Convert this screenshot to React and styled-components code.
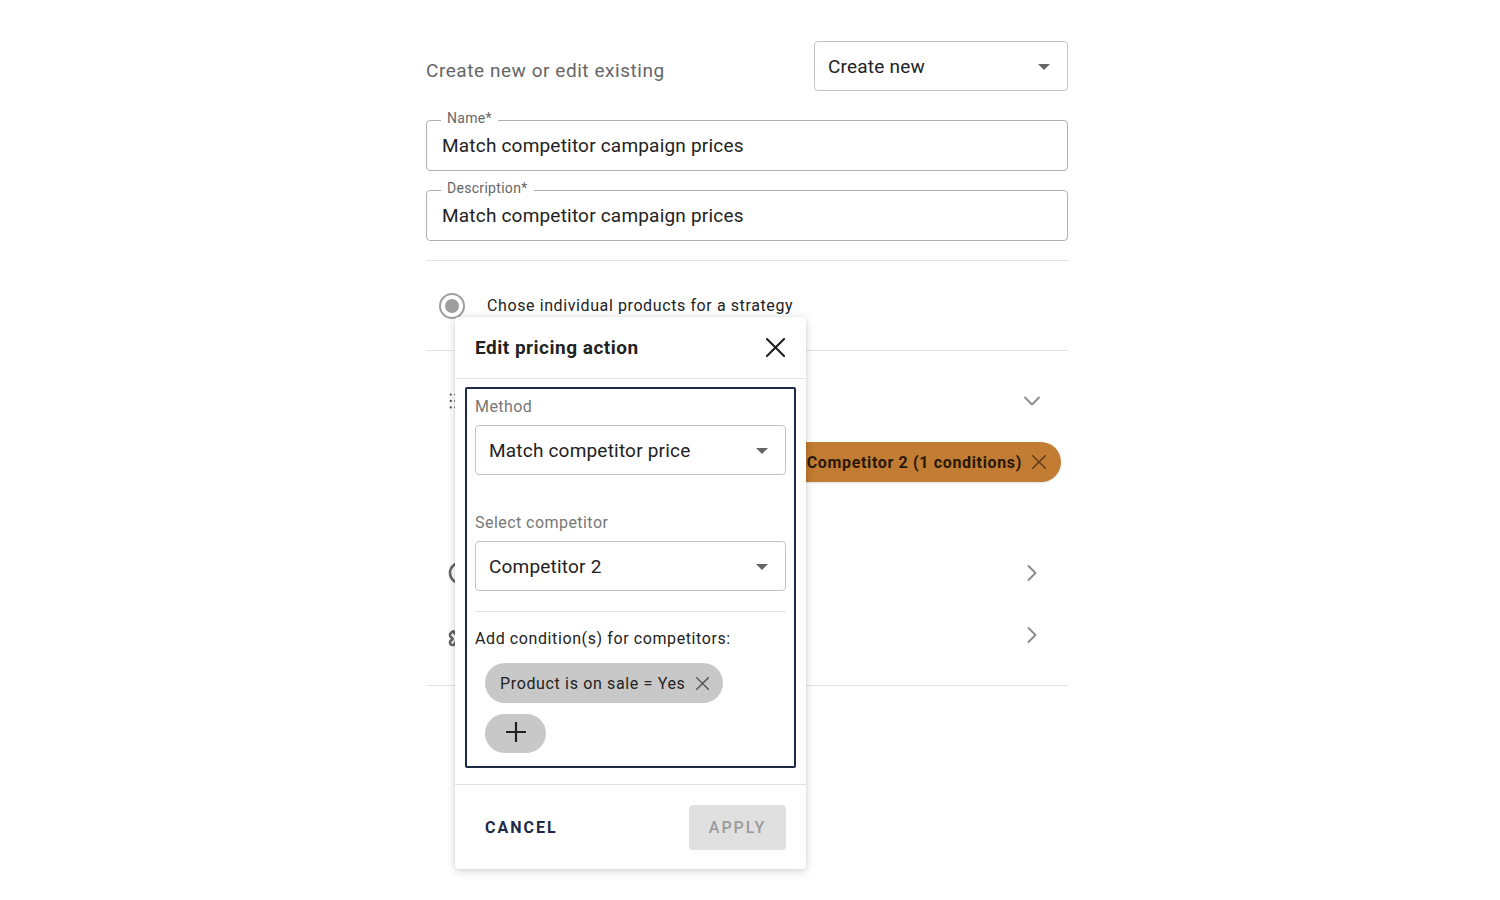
import styled, { createGlobalStyle } from "styled-components";
import { ChevronDown, ChevronRight, List, Circle, Puzzle } from "lucide-react";

const GlobalStyle = createGlobalStyle`
  body {
    margin: 0;
    background: #ffffff;
    font-family: Roboto, "Liberation Sans", sans-serif;
    color: #222222;
  }
`;

const Caret = () => (
  <svg width="12" height="6" viewBox="0 0 12 6">
    <path d="M0 0 L12 0 L6 6 Z" fill="#666" />
  </svg>
);

const Cross = ({ size, color, stroke }) => (
  <svg width={size} height={size} viewBox="0 0 20 20">
    <path
      d="M1 1 L19 19 M19 1 L1 19"
      stroke={color}
      strokeWidth={stroke}
      strokeLinecap="square"
      fill="none"
    />
  </svg>
);

const PlusMark = () => (
  <svg width="20" height="20" viewBox="0 0 20 20">
    <path d="M10 0 V20 M0 10 H20" stroke="#222" strokeWidth="2.2" fill="none" />
  </svg>
);

const App = () => {
  return (
    <>
      <GlobalStyle />
      <Page>
        <Column>
          <TopRow>
            <TopLabel>Create new or edit existing</TopLabel>
            <Select width="254px">
              <span>Create new</span>
              <Caret />
            </Select>
          </TopRow>

          <OutlinedField>
            <FieldLegend>Name*</FieldLegend>
            <span>Match competitor campaign prices</span>
          </OutlinedField>
          <OutlinedField>
            <FieldLegend>Description*</FieldLegend>
            <span>Match competitor campaign prices</span>
          </OutlinedField>

          <Divider />

          <RadioRow>
            <Radio>
              <span />
            </Radio>
            <RadioText>Chose individual products for a strategy</RadioText>
          </RadioRow>

          <Divider />

          <ListRow top="30px">
            <List size={22} color="#555" strokeWidth={2.5} />
            <ChevronDown size={28} color="#8a8a8a" strokeWidth={1.6} />
          </ListRow>
          <ChipRow>
            <OrangeChip>
              Competitor 2 (1 conditions)
              <Cross size={14} color="#5a3a1a" stroke={2} />
            </OrangeChip>
          </ChipRow>
          <ListRow top="66px" height="50px">
            <Circle size={24} color="#666" strokeWidth={2.6} />
            <ChevronRight size={28} color="#8a8a8a" strokeWidth={1.6} />
          </ListRow>
          <ListRow top="12px" height="50px">
            <Puzzle size={24} color="#666" strokeWidth={2.6} />
            <ChevronRight size={28} color="#8a8a8a" strokeWidth={1.6} />
          </ListRow>

          <Divider top="25px" />

          <Dialog>
            <DialogHeader>
              <DialogTitle>Edit pricing action</DialogTitle>
              <Cross size={19} color="#1e1e1e" stroke={2.2} />
            </DialogHeader>
            <DialogBody>
              <FocusBox>
                <SmallLabel top="0px">Method</SmallLabel>
                <Select width="100%">
                  <span>Match competitor price</span>
                  <Caret />
                </Select>
                <SmallLabel top="38px">Select competitor</SmallLabel>
                <Select width="100%">
                  <span>Competitor 2</span>
                  <Caret />
                </Select>
                <InnerDivider />
                <ConditionLabel>Add condition(s) for competitors:</ConditionLabel>
                <GreyChip>
                  Product is on sale = Yes
                  <Cross size={13} color="#555" stroke={2.2} />
                </GreyChip>
                <AddButton>
                  <PlusMark />
                </AddButton>
              </FocusBox>
            </DialogBody>
            <DialogFooter>
              <CancelButton>CANCEL</CancelButton>
              <ApplyButton>APPLY</ApplyButton>
            </DialogFooter>
          </Dialog>
        </Column>
      </Page>
    </>
  );
};

const Page = styled.div`
  min-height: 900px;
  padding-top: 41px;
`;

const Column = styled.div`
  position: relative;
  width: 642px;
  margin-left: 426px;
  display: flex;
  flex-direction: column;
`;

const TopRow = styled.div`
  display: flex;
  align-items: center;
  justify-content: space-between;
  margin-bottom: 29px;
`;

const TopLabel = styled.div`
  font-size: 19px;
  color: #666;
  letter-spacing: 0.55px;
  margin-top: 9px;
`;

const Select = styled.div`
  box-sizing: border-box;
  width: ${(p) => p.width};
  height: 50px;
  border: 1px solid #c4c4c4;
  border-radius: 4px;
  display: flex;
  align-items: center;
  justify-content: space-between;
  padding: 0 17px 0 13px;
  font-size: 19px;
  letter-spacing: 0.2px;
  color: #222;
  background: #fff;

  svg {
    margin-top: 1px;
  }
`;

const OutlinedField = styled.div`
  position: relative;
  box-sizing: border-box;
  height: 51px;
  border: 1px solid #b0b0b0;
  border-radius: 4px;
  display: flex;
  align-items: center;
  padding: 0 15px;
  font-size: 19px;
  letter-spacing: 0.2px;
  margin-bottom: 19px;
`;

const FieldLegend = styled.span`
  position: absolute;
  top: -11px;
  left: 14px;
  padding: 0 6px;
  background: #fff;
  font-size: 14px;
  color: #666;
  letter-spacing: 0.3px;
`;

const Divider = styled.div`
  height: 1px;
  background: #e2e2e2;
  margin-top: ${(p) => p.top || "0"};
`;

const RadioRow = styled.div`
  height: 89px;
  display: flex;
  align-items: center;
  gap: 22px;
  padding-left: 13px;
`;

const RadioText = styled.span`
  font-size: 16px;
  letter-spacing: 0.6px;
  color: #222;
`;

const Radio = styled.div`
  box-sizing: border-box;
  width: 26px;
  height: 26px;
  border-radius: 50%;
  border: 2px solid #9e9e9e;
  display: flex;
  align-items: center;
  justify-content: center;
  span {
    width: 14px;
    height: 14px;
    border-radius: 50%;
    background: #9e9e9e;
  }
`;

const ListRow = styled.div`
  height: ${(p) => p.height || "40px"};
  margin-top: ${(p) => p.top};
  display: flex;
  align-items: center;
  justify-content: space-between;
  padding: 0 22px 0 22px;
`;

const ChipRow = styled.div`
  margin-top: 21px;
  display: flex;
  justify-content: flex-end;
  padding-right: 7px;
`;

const OrangeChip = styled.div`
  height: 40px;
  border-radius: 20px;
  background: #c27c33;
  display: flex;
  align-items: center;
  gap: 10px;
  padding: 0 15px 0 20px;
  font-size: 16px;
  font-weight: 700;
  letter-spacing: 0.65px;
  color: #2a1808;
  box-shadow: 0 1px 2px rgba(0, 0, 0, 0.12);
`;

const Dialog = styled.div`
  position: absolute;
  left: 29px;
  top: 276px;
  width: 351px;
  background: #fff;
  border-radius: 4px;
  box-shadow: 0 2px 10px rgba(0, 0, 0, 0.18), 0 0 2px rgba(0, 0, 0, 0.08);
  display: flex;
  flex-direction: column;
`;

const DialogHeader = styled.div`
  height: 61px;
  display: flex;
  align-items: center;
  justify-content: space-between;
  padding: 0 21px 0 20px;
  border-bottom: 1px solid #e2e2e2;
`;

const DialogTitle = styled.div`
  font-size: 19px;
  font-weight: 700;
  color: #222;
  letter-spacing: 0.5px;
`;

const DialogBody = styled.div`
  padding: 8px 10px 16px;
  border-bottom: 1px solid #e2e2e2;
`;

const FocusBox = styled.div`
  border: 2px solid #1c2a48;
  border-radius: 2px;
  padding: 8px 8px 13px;
  display: flex;
  flex-direction: column;
  align-items: flex-start;
`;

const SmallLabel = styled.div`
  margin-top: ${(p) => p.top};
  height: 20px;
  line-height: 20px;
  font-size: 16px;
  color: #777;
  letter-spacing: 0.45px;
  margin-bottom: 8px;
`;

const InnerDivider = styled.div`
  width: 100%;
  height: 1px;
  background: #e4e4e4;
  margin-top: 20px;
`;

const ConditionLabel = styled.div`
  margin-top: 17px;
  font-size: 16px;
  line-height: 20px;
  color: #222;
  letter-spacing: 0.6px;
`;

const GreyChip = styled.div`
  margin: 14px 0 0 10px;
  height: 40px;
  border-radius: 20px;
  background: #c8c8c8;
  display: flex;
  align-items: center;
  gap: 11px;
  padding: 0 14px 0 15px;
  font-size: 16px;
  letter-spacing: 0.65px;
  color: #222;
`;

const AddButton = styled.div`
  margin: 11px 0 0 10px;
  width: 61px;
  height: 39px;
  border-radius: 20px;
  background: #c8c8c8;
  display: flex;
  align-items: center;
  justify-content: center;
  padding-bottom: 4px;
  box-sizing: border-box;
`;

const DialogFooter = styled.div`
  height: 84px;
  display: flex;
  align-items: center;
  justify-content: space-between;
  padding: 0 20px 0 30px;
`;

const CancelButton = styled.div`
  font-size: 16px;
  font-weight: 700;
  letter-spacing: 2px;
  color: #1c2a48;
`;

const ApplyButton = styled.div`
  width: 97px;
  height: 45px;
  border-radius: 4px;
  background: #e0e0e0;
  color: #9a9a9a;
  font-size: 16px;
  font-weight: 500;
  letter-spacing: 2px;
  display: flex;
  align-items: center;
  justify-content: center;
`;

export default App;
